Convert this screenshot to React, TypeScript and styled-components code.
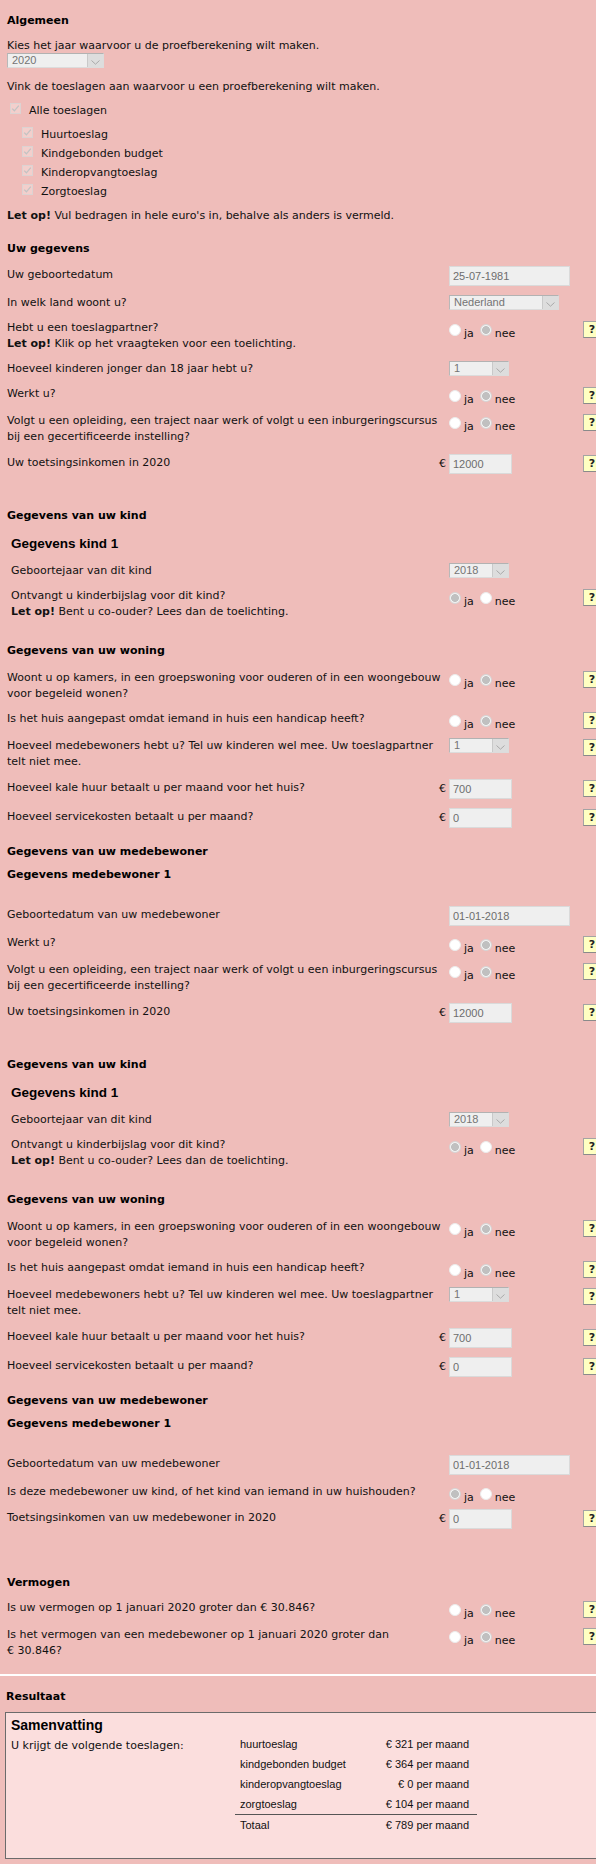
import React, { ReactNode } from 'react'
import styled, { createGlobalStyle } from 'styled-components'

const GlobalStyle = createGlobalStyle`
  html, body {
    margin: 0;
    padding: 0;
    overflow: hidden;
  }
  body {
    background: #efbdba;
    color: #111;
    font-family: 'DejaVu Sans', Verdana, sans-serif;
    font-size: 11px;
  }
`

type Answer = 'ja' | 'nee'

type Control =
  | { type: 'text'; value: string; width: number }
  | { type: 'money'; value: string }
  | { type: 'select'; value: string; width: number }
  | { type: 'radio'; checked: Answer }

interface FieldProps {
  label: ReactNode
  control: Control
  help?: boolean
  indent?: boolean
}

const Chevron = () => (
  <svg width="9" height="5" viewBox="0 0 9 5">
    <path d="M0.5 0.5 L4.5 4.2 L8.5 0.5" fill="none" stroke="#a9a9a9" strokeWidth="1" />
  </svg>
)

const Select = ({ value, width }: { value: string; width: number }) => (
  <SelectBox $width={width}>
    <SelectValue>{value}</SelectValue>
    <SelectArrow>
      <Chevron />
    </SelectArrow>
  </SelectBox>
)

const Check = () => (
  <CheckBox>
    <svg width="9" height="9" viewBox="0 0 9 9">
      <path d="M1.2 4.6 L3.4 6.8 L7.8 1.6" fill="none" stroke="#c3c3c3" strokeWidth="1.3" />
    </svg>
  </CheckBox>
)

const Radios = ({ checked }: { checked: Answer }) => (
  <RadioGroup>
    <RadioDot $on={checked === 'ja'} />
    <RadioText>ja</RadioText>
    <RadioDot $on={checked === 'nee'} />
    <RadioText>nee</RadioText>
  </RadioGroup>
)

const renderControl = (control: Control) => {
  switch (control.type) {
    case 'text':
      return <Input readOnly value={control.value} $width={control.width} />
    case 'money':
      return <Input readOnly value={control.value} $width={63} />
    case 'select':
      return <Select value={control.value} width={control.width} />
    case 'radio':
      return <Radios checked={control.checked} />
  }
}

const Field = ({ label, control, help, indent }: FieldProps) => {
  const boxed = control.type === 'text' || control.type === 'money'
  return (
    <Row>
      <Label $span={control.type !== 'money'} $pad={boxed ? 1 : 0} $indent={!!indent}>
        {label}
      </Label>
      {control.type === 'money' && <Euro>€</Euro>}
      <ControlCell>{renderControl(control)}</ControlCell>
      {help && <Help>?</Help>}
    </Row>
  )
}

const ChildSection = () => (
  <>
    <Title $top={34}>Gegevens van uw kind</Title>
    <SubTitle $top={11} $kind>
      Gegevens kind 1
    </SubTitle>
    <Fields $top={10}>
      <Field indent label="Geboortejaar van dit kind" control={{ type: 'select', value: '2018', width: 60 }} />
      <Field
        indent
        help
        label={
          <>
            Ontvangt u kinderbijslag voor dit kind?
            <br />
            <b>Let op!</b> Bent u co-ouder? Lees dan de toelichting.
          </>
        }
        control={{ type: 'radio', checked: 'ja' }}
      />
    </Fields>
  </>
)

const HousingSection = () => (
  <>
    <Title $top={23}>Gegevens van uw woning</Title>
    <Fields $top={11}>
      <Field
        help
        label={
          <>
            Woont u op kamers, in een groepswoning voor ouderen of in een woongebouw
            <br />
            voor begeleid wonen?
          </>
        }
        control={{ type: 'radio', checked: 'nee' }}
      />
      <Field
        help
        label="Is het huis aangepast omdat iemand in huis een handicap heeft?"
        control={{ type: 'radio', checked: 'nee' }}
      />
      <Field
        help
        label={
          <>
            Hoeveel medebewoners hebt u? Tel uw kinderen wel mee. Uw toeslagpartner
            <br />
            telt niet mee.
          </>
        }
        control={{ type: 'select', value: '1', width: 60 }}
      />
      <Field help label="Hoeveel kale huur betaalt u per maand voor het huis?" control={{ type: 'money', value: '700' }} />
      <Field help label="Hoeveel servicekosten betaalt u per maand?" control={{ type: 'money', value: '0' }} />
    </Fields>
  </>
)

const studyLabel = (
  <>
    Volgt u een opleiding, een traject naar werk of volgt u een inburgeringscursus
    <br />
    bij een gecertificeerde instelling?
  </>
)

const toeslagen = ['Huurtoeslag', 'Kindgebonden budget', 'Kinderopvangtoeslag', 'Zorgtoeslag']

const summary = [
  ['huurtoeslag', '€ 321 per maand'],
  ['kindgebonden budget', '€ 364 per maand'],
  ['kinderopvangtoeslag', '€ 0 per maand'],
  ['zorgtoeslag', '€ 104 per maand']
]

const App = () => (
  <>
    <GlobalStyle />
    <Form>
      <Title>Algemeen</Title>
      <Text $top={10} $lh={14}>
        Kies het jaar waarvoor u de proefberekening wilt maken.
      </Text>
      <Select value="2020" width={97} />
      <Text $top={11}>Vink de toeslagen aan waarvoor u een proefberekening wilt maken.</Text>
      <CheckList>
        <CheckRow $sub={false}>
          <Check />
          Alle toeslagen
        </CheckRow>
        <SubChecks>
          {toeslagen.map((t) => (
            <CheckRow key={t} $sub>
              <Check />
              {t}
            </CheckRow>
          ))}
        </SubChecks>
      </CheckList>
      <Text $top={7}>
        <b>Let op!</b> Vul bedragen in hele euro's in, behalve als anders is vermeld.
      </Text>

      <Title $top={17}>Uw gegevens</Title>
      <Fields $top={9}>
        <Field label="Uw geboortedatum" control={{ type: 'text', value: '25-07-1981', width: 121 }} />
        <Field label="In welk land woont u?" control={{ type: 'select', value: 'Nederland', width: 110 }} />
        <Field
          help
          label={
            <>
              Hebt u een toeslagpartner?
              <br />
              <b>Let op!</b> Klik op het vraagteken voor een toelichting.
            </>
          }
          control={{ type: 'radio', checked: 'nee' }}
        />
        <Field label="Hoeveel kinderen jonger dan 18 jaar hebt u?" control={{ type: 'select', value: '1', width: 60 }} />
        <Field help label="Werkt u?" control={{ type: 'radio', checked: 'nee' }} />
        <Field help label={studyLabel} control={{ type: 'radio', checked: 'nee' }} />
        <Field help label="Uw toetsingsinkomen in 2020" control={{ type: 'money', value: '12000' }} />
      </Fields>

      <ChildSection />
      <HousingSection />
      <Title $top={16}>Gegevens van uw medebewoner</Title>
      <SubTitle $top={7}>Gegevens medebewoner 1</SubTitle>
      <Fields $top={23}>
        <Field label="Geboortedatum van uw medebewoner" control={{ type: 'text', value: '01-01-2018', width: 121 }} />
        <Field help label="Werkt u?" control={{ type: 'radio', checked: 'nee' }} />
        <Field help label={studyLabel} control={{ type: 'radio', checked: 'nee' }} />
        <Field help label="Uw toetsingsinkomen in 2020" control={{ type: 'money', value: '12000' }} />
      </Fields>

      <ChildSection />
      <HousingSection />
      <Title $top={16}>Gegevens van uw medebewoner</Title>
      <SubTitle $top={7}>Gegevens medebewoner 1</SubTitle>
      <Fields $top={23}>
        <Field label="Geboortedatum van uw medebewoner" control={{ type: 'text', value: '01-01-2018', width: 121 }} />
        <Field
          label="Is deze medebewoner uw kind, of het kind van iemand in uw huishouden?"
          control={{ type: 'radio', checked: 'ja' }}
        />
        <Field help label="Toetsingsinkomen van uw medebewoner in 2020" control={{ type: 'money', value: '0' }} />
      </Fields>

      <Title $top={46}>Vermogen</Title>
      <Fields $top={9}>
        <Field
          help
          label="Is uw vermogen op 1 januari 2020 groter dan € 30.846?"
          control={{ type: 'radio', checked: 'nee' }}
        />
        <Field
          help
          label={
            <>
              Is het vermogen van een medebewoner op 1 januari 2020 groter dan
              <br />€ 30.846?
            </>
          }
          control={{ type: 'radio', checked: 'nee' }}
        />
      </Fields>
    </Form>

    <Divider />

    <Result>
      <ResultTitle>Resultaat</ResultTitle>
      <SummaryBox>
        <SummaryTitle>Samenvatting</SummaryTitle>
        <SummaryBody>
          <SummaryIntro>U krijgt de volgende toeslagen:</SummaryIntro>
          <SummaryTable>
            {summary.map(([name, amount]) => (
              <SummaryRow key={name} $total={false}>
                <span>{name}</span>
                <span>{amount}</span>
              </SummaryRow>
            ))}
            <SummaryRow $total>
              <span>Totaal</span>
              <span>€ 789 per maand</span>
            </SummaryRow>
          </SummaryTable>
        </SummaryBody>
      </SummaryBox>
    </Result>
  </>
)

export default App

const Form = styled.div`
  width: 620px;
  padding: 13px 0 0 7px;
  box-sizing: border-box;
`

const Title = styled.h3<{ $top?: number }>`
  margin: ${({ $top }) => $top ?? 0}px 0 0;
  font-size: 11px;
  line-height: 16px;
  font-weight: bold;
  color: #000;
`

const SubTitle = styled.h4<{ $top: number; $kind?: boolean }>`
  margin: ${({ $top }) => $top}px 0 0;
  padding-left: ${({ $kind }) => ($kind ? 4 : 0)}px;
  font-family: ${({ $kind }) => ($kind ? "'Liberation Sans', Arial, sans-serif" : 'inherit')};
  font-size: ${({ $kind }) => ($kind ? 13.5 : 11)}px;
  line-height: ${({ $kind }) => ($kind ? 18 : 16)}px;
  font-weight: bold;
  color: #000;
`

const Text = styled.p<{ $top: number; $lh?: number }>`
  margin: ${({ $top }) => $top}px 0 0;
  line-height: ${({ $lh }) => $lh ?? 16}px;
`

const CheckList = styled.div`
  margin-top: 6px;
`

const SubChecks = styled.div`
  margin-top: 5px;
`

const CheckRow = styled.div<{ $sub: boolean }>`
  display: flex;
  align-items: flex-start;
  gap: 8px;
  height: 19px;
  line-height: 19px;
  padding-left: ${({ $sub }) => ($sub ? 15 : 3)}px;
`

const CheckBox = styled.span`
  display: flex;
  align-items: center;
  justify-content: center;
  width: 11px;
  height: 11px;
  margin-top: 2px;
  box-sizing: border-box;
  border: 1px solid #dcd3d2;
  background: #f3cfcc;
`

const Fields = styled.div<{ $top: number }>`
  display: flex;
  flex-direction: column;
  gap: 9px;
  margin-top: ${({ $top }) => $top}px;
`

const Row = styled.div`
  display: grid;
  grid-template-columns: 430px 12px 134px 24px;
  align-items: start;
`

const Label = styled.div<{ $span: boolean; $pad: number; $indent: boolean }>`
  grid-column: ${({ $span }) => ($span ? '1 / span 2' : '1')};
  padding-top: ${({ $pad }) => $pad}px;
  padding-left: ${({ $indent }) => ($indent ? 4 : 0)}px;
  line-height: 16px;
`

const Euro = styled.span`
  grid-column: 2;
  padding-top: 2px;
  line-height: 16px;
  text-align: right;
  padding-right: 3px;
`

const ControlCell = styled.div`
  grid-column: 3;
  display: flex;
`

const Input = styled.input<{ $width: number }>`
  width: ${({ $width }) => $width}px;
  height: 20px;
  margin: 0;
  padding: 0 0 0 3px;
  box-sizing: border-box;
  border: 1px solid #dadada;
  background: #efefef;
  color: #6d6d6d;
  font-family: 'Liberation Sans', Arial, sans-serif;
  font-size: 11px;
  outline: none;
`

const SelectBox = styled.div<{ $width: number }>`
  display: flex;
  width: ${({ $width }) => $width}px;
  height: 15px;
  box-sizing: border-box;
  border: 1px solid #dcdcdc;
  border-top-color: #b2b2b2;
  border-left-color: #b8b8b8;
  background: #efefef;
  font-family: 'Liberation Sans', Arial, sans-serif;
  font-size: 11px;
  color: #747474;
`

const SelectValue = styled.span`
  flex: 1;
  padding-left: 4px;
  line-height: 13px;
`

const SelectArrow = styled.span`
  display: flex;
  align-items: flex-end;
  justify-content: center;
  width: 16px;
  padding-bottom: 2px;
  box-sizing: border-box;
  background: #dddddd;
  border-left: 1px solid #c9c9c9;
`

const RadioGroup = styled.div`
  display: flex;
  align-items: flex-end;
  height: 12px;
  margin-top: 4px;
`

const RadioDot = styled.span<{ $on: boolean }>`
  width: 12px;
  height: 12px;
  box-sizing: border-box;
  border-radius: 50%;
  border: 1px solid ${({ $on }) => ($on ? '#d6d6d6' : '#ececec')};
  background: ${({ $on }) => ($on ? 'radial-gradient(circle, #c0c0c0 0 3.6px, #f2f2f2 4.2px)' : '#ffffff')};
  margin-right: 3px;
`

const RadioText = styled.span`
  line-height: 12px;
  margin-bottom: -4px;
  margin-right: 6px;
`

const Help = styled.span`
  grid-column: 4;
  width: 18px;
  height: 17px;
  margin-top: 1px;
  box-sizing: border-box;
  border: 1px solid #8a8a8a;
  border-top-color: #a4a4a4;
  border-left-color: #a4a4a4;
  background: #ffffc2;
  color: #222;
  font-weight: bold;
  font-size: 11px;
  line-height: 15px;
  text-align: center;
`

const Divider = styled.div`
  height: 2px;
  margin-top: 15px;
  background: #ffffff;
`

const Result = styled.div`
  padding-left: 5px;
`

const ResultTitle = styled.h3`
  margin: 13px 0 0;
  padding-left: 1px;
  font-size: 11px;
  line-height: 16px;
  font-weight: bold;
  color: #000;
`

const SummaryBox = styled.div`
  width: 620px;
  height: 147px;
  margin-top: 7px;
  padding: 4px 5px;
  box-sizing: border-box;
  border: 1px solid #6b6b6b;
  background: #fbdedd;
`

const SummaryTitle = styled.h4`
  margin: 0;
  font-family: 'Liberation Sans', Arial, sans-serif;
  font-size: 14px;
  line-height: 17px;
  font-weight: bold;
  color: #000;
`

const SummaryBody = styled.div`
  display: flex;
`

const SummaryIntro = styled.div`
  width: 224px;
  padding-top: 4px;
  line-height: 16px;
`

const SummaryTable = styled.div`
  width: 242px;
  font-family: 'Liberation Sans', Arial, sans-serif;
  font-size: 11px;
  color: #111;
`

const SummaryRow = styled.div<{ $total: boolean }>`
  display: flex;
  justify-content: space-between;
  height: 20px;
  line-height: 20px;
  padding: 0 8px 0 5px;
  border-top: ${({ $total }) => ($total ? '1px solid #555' : 'none')};
`
